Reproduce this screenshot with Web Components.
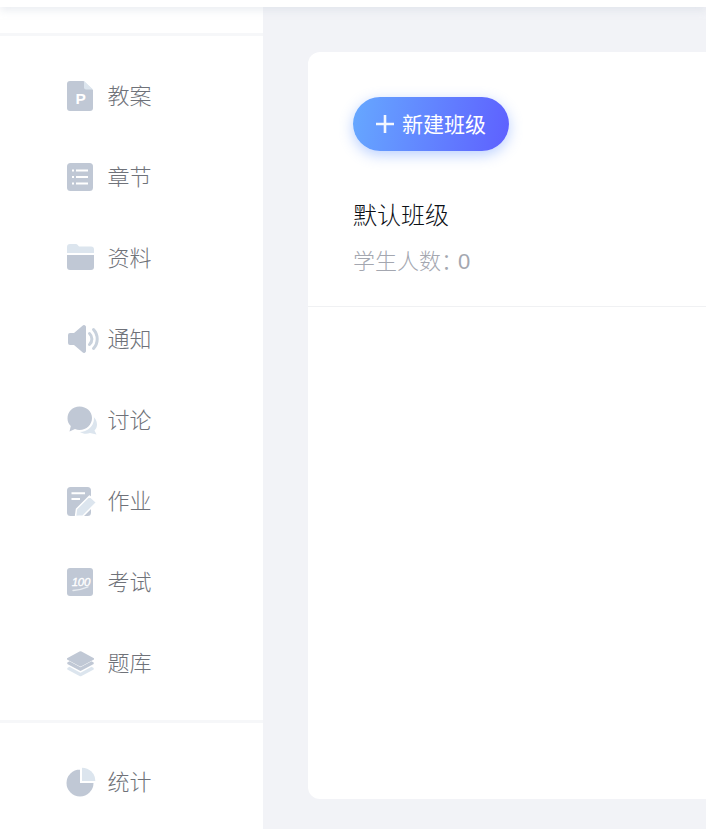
<!DOCTYPE html>
<html lang="zh">
<head>
<meta charset="utf-8">
<title>班级</title>
<style>
  html, body { margin: 0; height: 100%; overflow: hidden; background: #f2f3f7; }
  body { font-family: "Noto Sans CJK SC", "Liberation Sans", sans-serif; }
</style>
</head>
<body>
<app-shell>
  <side-nav slot="nav">
    <nav-item label="教案">
      <svg slot="icon" width="32" height="32" viewBox="0 0 32 32">
        <path d="M3 1H16.500L26 10V28a3 3 0 0 1-3 3H3a3 3 0 0 1-3-3V4a3 3 0 0 1 3-3Z" fill="#c0c8d5"/>
        <path d="M17 1L26 9.500H19a2 2 0 0 1-2-2Z" fill="#dce5ee"/>
        <text x="8.500" y="24" font-family="Liberation Sans" font-weight="700" font-size="15.500" fill="#fff">P</text>
      </svg>
    </nav-item>
    <nav-item label="章节">
      <svg slot="icon" width="32" height="32" viewBox="0 0 32 32">
        <rect x="0" y="2" width="26" height="28" rx="3.500" fill="#c0c8d5"/>
        <path d="M9 9.500H21M9 16H21M9 22.500H21" stroke="#fff" stroke-width="2"/>
        <path d="M5 9.500H7M5 16H7M5 22.500H7" stroke="#fff" stroke-width="2"/>
      </svg>
    </nav-item>
    <nav-item label="资料">
      <svg slot="icon" width="32" height="32" viewBox="0 0 32 32">
        <path d="M0 5a3 3 0 0 1 3-3H9a2 2 0 0 1 1.500.700L12 4.500H24a3 3 0 0 1 3 3V11H0Z" fill="#dce5ee"/>
        <path d="M0 13H27V25a3 3 0 0 1-3 3H3a3 3 0 0 1-3-3Z" fill="#c0c8d5"/>
      </svg>
    </nav-item>
    <nav-item label="通知">
      <svg slot="icon" width="32" height="32" viewBox="0 0 32 32">
        <path d="M1 12a2 2 0 0 1 2-2H7L15.500 2.800A2 2 0 0 1 19 4.500V27.500a2 2 0 0 1-3.500 1.700L7 22H3a2 2 0 0 1-2-2Z" fill="#c0c8d5"/>
        <path d="M22.500 10.500a7.500 7.500 0 0 1 0 11M26.500 6.500a14 14 0 0 1 0 19" fill="none" stroke="#c9d2dd" stroke-width="3" stroke-linecap="round"/>
      </svg>
    </nav-item>
    <nav-item label="讨论">
      <svg slot="icon" width="32" height="32" viewBox="0 0 32 32">
        <path d="M20 10C27 11 30 16 30 20.500c0 2.500-1 4.500-2.500 6L29.500 30.500L23 29C20 30.200 16 30 13 28Z" fill="#dce5ee"/>
        <ellipse cx="12.500" cy="14.500" rx="14.500" ry="13.500" fill="#fff"/>
        <path d="M12.500 2.500C19.500 2.500 25 7.500 25 14S19.500 26 12.500 26C11 26 9.500 25.600 8 25L2.500 27.500L3.800 22C1.800 20 .500 17.500 .500 14.500C.500 7.500 5.500 2.500 12.500 2.500Z" fill="#c0c8d5"/>
      </svg>
    </nav-item>
    <nav-item label="作业">
      <svg slot="icon" width="32" height="32" viewBox="0 0 32 32">
        <rect x="0" y="2" width="24" height="29" rx="3.500" fill="#c0c8d5"/>
        <path d="M4.500 8.300H18M4.500 14H13" stroke="#fff" stroke-width="2"/>
        <path d="M8.500 31.500L9.500 24L22.500 11L29.500 17.500L16 31Z" fill="#dce5ee" stroke="#fff" stroke-width="1.500" stroke-linejoin="round"/>
      </svg>
    </nav-item>
    <nav-item label="考试">
      <svg slot="icon" width="32" height="32" viewBox="0 0 32 32">
        <rect x="0" y="2" width="26" height="28" rx="3" fill="#c0c8d5"/>
        <text x="4.700" y="19.500" font-family="Liberation Sans" font-style="italic" font-size="11.500" letter-spacing="-.3" fill="#fff" stroke="#fff" stroke-width=".35">100</text>
        <path d="M6 24.500C11 24 16 23 21 20.800" fill="none" stroke="#e8edf2" stroke-width="1.300" stroke-linecap="round"/>
      </svg>
    </nav-item>
    <nav-item label="题库">
      <svg slot="icon" width="32" height="32" viewBox="0 0 32 32">
        <path d="M12.500 4.500a2 2 0 0 1 2 0L26.500 11a1 1 0 0 1 0 1.800L14.500 19.300a2 2 0 0 1-2 0L.500 12.800a1 1 0 0 1 0-1.800Z" fill="#c0c8d5"/>
        <path d="M.300 15.500L2.500 14.300L13.500 20.300L24.500 14.300L26.700 15.500V17L14.500 23.600a2 2 0 0 1-2 0L.300 17Z" fill="#c0c8d5"/>
        <path d="M.300 21L2.500 19.800L13.500 25.800L24.500 19.800L26.700 21V22.500L14.500 29a2 2 0 0 1-2 0L.300 22.500Z" fill="#dce5ee"/>
      </svg>
    </nav-item>
    <nav-item label="统计" slot="extra">
      <svg slot="icon" width="32" height="32" viewBox="0 0 32 32">
        <path d="M13 3V17H26.500A13.500 13.500 0 1 1 13 3.500Z" fill="#c0c8d5"/>
        <path d="M15 1.700A13.300 13.300 0 0 1 28.300 15H15Z" fill="#dce5ee"/>
      </svg>
    </nav-item>
  </side-nav>
  <class-panel>
    <class-row name="默认班级" count="0"></class-row>
  </class-panel>
</app-shell>
<script>
class AppShell extends HTMLElement {
  constructor() {
    super();
    this.attachShadow({ mode: 'open' });
    this.shadowRoot.innerHTML = `
      <style>
        :host { display: flex; flex-direction: column; height: 829px; overflow: hidden; }
        .top { height: 7px; flex: none; background: #fff; position: relative; z-index: 2; box-shadow: 0 2px 10px rgba(200, 208, 218, .55); }
        .body { flex: 1; display: flex; min-height: 0; }
      </style>
      <div class="top"></div>
      <div class="body">
        <slot name="nav"></slot>
        <slot></slot>
      </div>
    `;
  }
}
customElements.define('app-shell', AppShell);

class SideNav extends HTMLElement {
  constructor() {
    super();
    this.attachShadow({ mode: 'open' });
    this.shadowRoot.innerHTML = `
      <style>
        :host { display: block; flex: none; width: 263px; background: #fff; }
        .head { height: 26px; border-bottom: 3px solid #f6f7f9; }
        .main { padding-top: 19px; }
        .extra { padding-top: 18px; }
        .rule { height: 3px; background: #f6f7f9; margin-top: 17px; }
      </style>
      <div class="head"></div>
      <div class="main"><slot></slot></div>
      <div class="rule"></div>
      <div class="extra"><slot name="extra"></slot></div>
    `;
  }
}
customElements.define('side-nav', SideNav);

class NavItem extends HTMLElement {
  constructor() {
    super();
    this.attachShadow({ mode: 'open' });
    this.shadowRoot.innerHTML = `
      <style>
        :host { display: flex; align-items: center; height: 81px; padding-left: 67px; }
        .icon { width: 41px; height: 32px; flex: none; }
        ::slotted(svg) { display: block; overflow: visible; }
        .label { font-size: 22px; font-weight: 300; line-height: 32px; color: #6f7279; padding-bottom: 4px; margin-left: -.5px; }
      </style>
      <div class="icon"><slot name="icon"></slot></div>
      <span class="label">${this.getAttribute('label')}</span>
    `;
  }
}
customElements.define('nav-item', NavItem);

class ClassPanel extends HTMLElement {
  constructor() {
    super();
    this.attachShadow({ mode: 'open' });
    this.shadowRoot.innerHTML = `
      <style>
        :host { display: block; flex: 1; min-width: 0; overflow: hidden; background: #f2f3f7; padding: 45px 0 30px 45px; }
        .card { width: 600px; height: 100%; background: #fff; border-radius: 12px; }
        .tools { padding: 45px 45px 0; }
        button {
          display: flex; align-items: center; gap: 8px; width: 156px; height: 54px; padding: 0 0 0 23px;
          border: 0; border-radius: 27px; color: #fff; font: inherit; font-size: 21px;
          background: linear-gradient(100deg, #66a8ff, #5e60ff);
          box-shadow: 0 4px 14px rgba(102, 150, 255, .45);
        }
        button svg { display: block; }
        button span { padding-bottom: 2px; }
      </style>
      <div class="card">
        <div class="tools">
          <button>
            <svg width="18" height="18" viewBox="0 0 18 18"><path d="M9 0V18M0 9H18" stroke="#fff" stroke-opacity=".92" stroke-width="2.600"/></svg>
            <span>新建班级</span>
          </button>
        </div>
        <slot></slot>
      </div>
    `;
  }
}
customElements.define('class-panel', ClassPanel);

class ClassRow extends HTMLElement {
  constructor() {
    super();
    this.attachShadow({ mode: 'open' });
    this.shadowRoot.innerHTML = `
      <style>
        :host { display: block; padding: 45px 45px 31px; border-bottom: 1px solid #f0f1f3; }
        .name { font-size: 24px; font-weight: 300; line-height: 36px; color: #0c0f16; }
        .count { font-size: 22px; font-weight: 300; line-height: 32px; color: #a4a7b0; margin-top: 11px; }
        .colon { display: inline-block; width: 17px; font-feature-settings: "palt"; line-height: 1; }
        .num { font-family: "Liberation Sans", sans-serif; font-weight: 400; line-height: 1; }
      </style>
      <div class="name">${this.getAttribute('name')}</div>
      <div class="count">学生人数<span class="colon">：</span><span class="num">${this.getAttribute('count')}</span></div>
    `;
  }
}
customElements.define('class-row', ClassRow);
</script>
</body>
</html>
